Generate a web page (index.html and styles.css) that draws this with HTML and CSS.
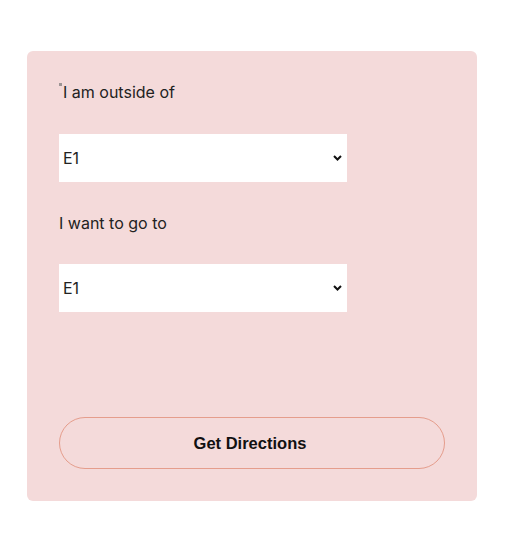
FILE: index.html
```html
<!DOCTYPE html>
<html lang="en">
<head>
<meta charset="utf-8">
<title>Directions</title>
<link rel="stylesheet" href="styles.css">
</head>
<body>
<div class="page">
  <form class="card">
    <label class="label label-first" for="from"><span class="marker"></span>I am outside of</label>
    <select id="from" class="select">
      <option>E1</option>
      <option>E2</option>
    </select>
    <label class="label label-second" for="to">I want to go to</label>
    <select id="to" class="select">
      <option>E1</option>
      <option>E2</option>
    </select>
    <button type="button" class="btn">Get Directions</button>
  </form>
</div>
</body>
</html>
```
FILE: styles.css
```css
html, body {
  margin: 0;
  padding: 0;
  background: #ffffff;
}
body {
  font-family: Inter, "Noto Sans", sans-serif;
  color: #222222;
}
.page {
  padding: 51px 0 0 27px;
}
.card {
  width: 450px;
  height: 450px;
  box-sizing: border-box;
  background: #f4dada;
  border-radius: 6px;
  padding: 29px 32px 32px 32px;
  display: flex;
  flex-direction: column;
  align-items: flex-start;
}
.label {
  display: block;
  font-size: 16px;
  line-height: 24px;
  color: #222222;
}
.label-first {
  margin-bottom: 30px;
}
.label-second {
  margin-top: 29px;
  margin-bottom: 29px;
}
.marker {
  display: inline-block;
  width: 3px;
  height: 3px;
  background: #9c9494;
  vertical-align: top;
  margin-top: 3px;
  margin-right: 1px;
}
.select {
  -webkit-appearance: none;
  appearance: none;
  width: 288px;
  height: 48px;
  border: none;
  background-color: #ffffff;
  background-image: url("data:image/svg+xml,%3Csvg xmlns='http://www.w3.org/2000/svg' width='9' height='6' viewBox='0 0 9 6'%3E%3Cpath d='M1 1 L4.5 4.5 L8 1' fill='none' stroke='%23111' stroke-width='2'/%3E%3C/svg%3E");
  background-repeat: no-repeat;
  background-position: right 5px center;
  font-family: Inter, "Noto Sans", sans-serif;
  font-size: 16px;
  color: #222222;
  padding: 0 20px 0 4px;
  border-radius: 0;
  outline: none;
}
.btn {
  margin-top: auto;
  width: 386px;
  height: 52px;
  border: 1px solid #e59d8c;
  border-radius: 26px;
  background: transparent;
  padding: 0 10px 0 6px;
  font-family: "Liberation Sans", Arial, sans-serif;
  font-size: 16.5px;
  font-weight: 700;
  color: #111111;
}
```
